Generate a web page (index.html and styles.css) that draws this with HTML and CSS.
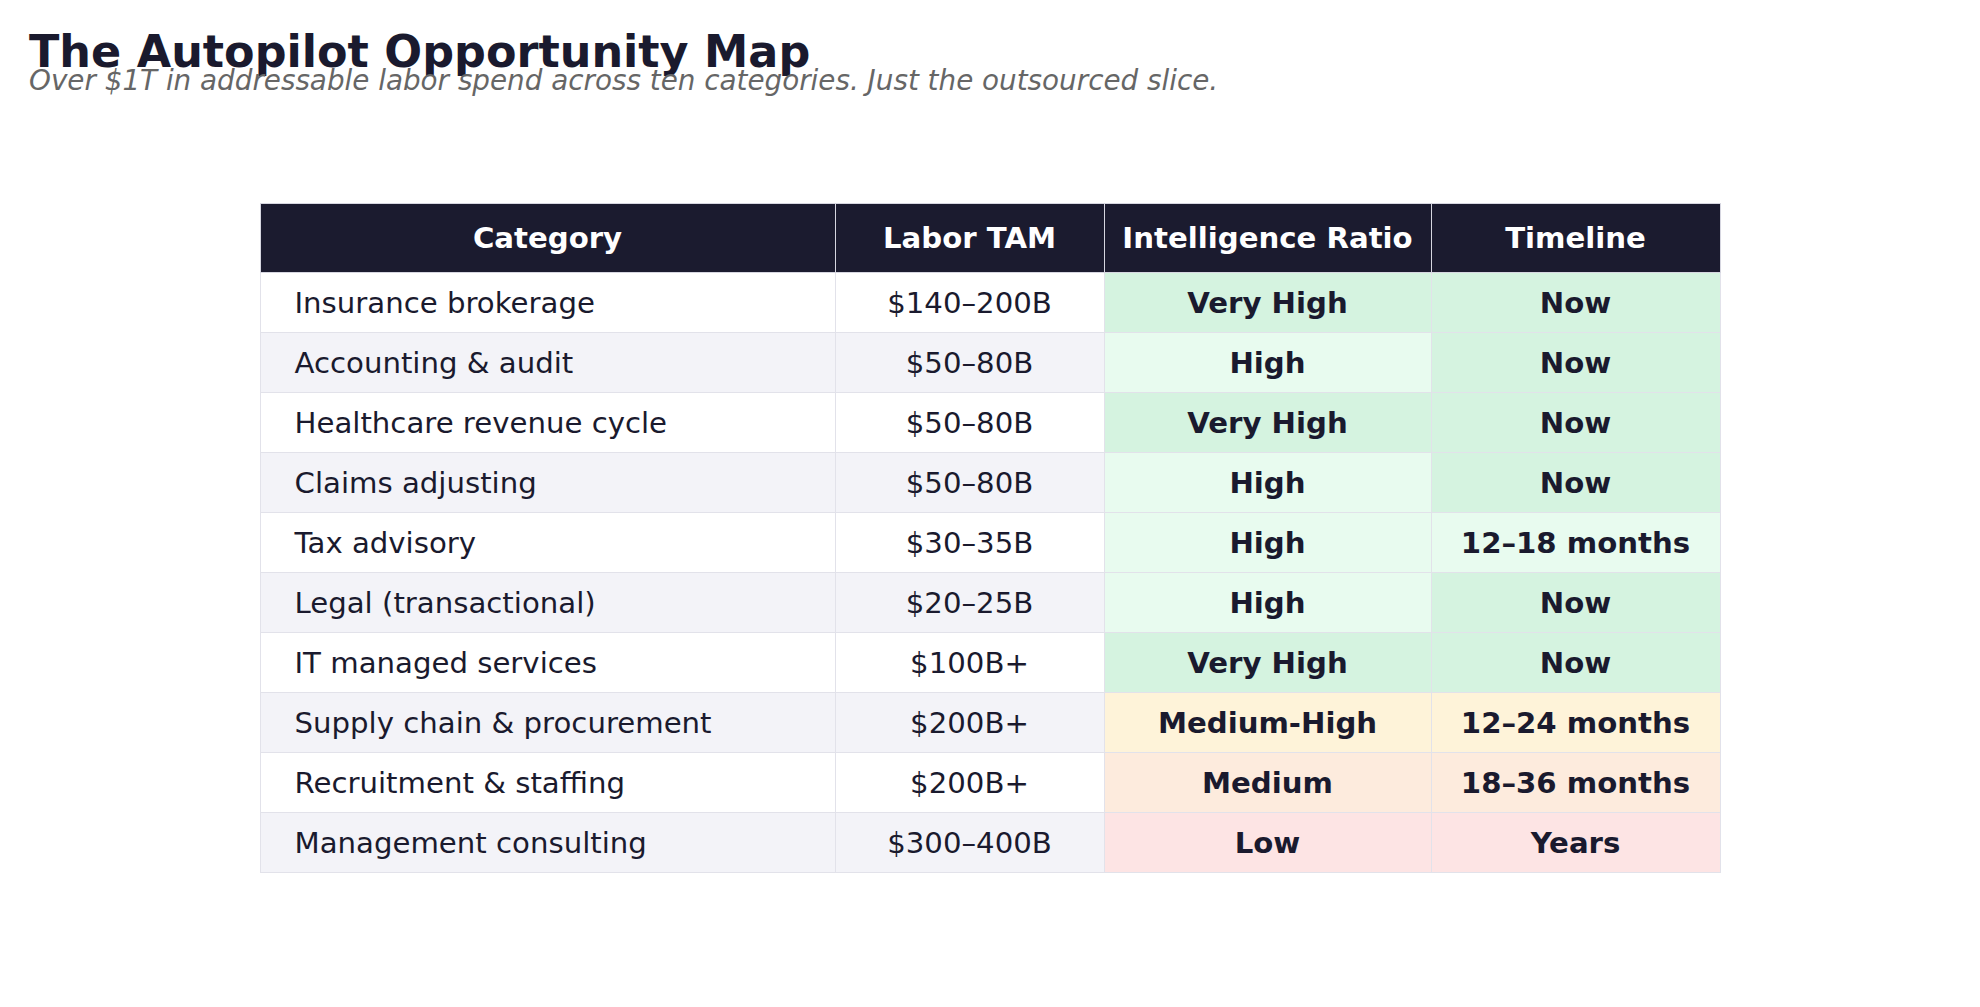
FILE: index.html
```html
<!DOCTYPE html>
<html lang="en">
<head>
<meta charset="utf-8">
<title>The Autopilot Opportunity Map</title>
<link rel="stylesheet" href="styles.css">
</head>
<body>
<header class="page-head">
  <h1 class="title">The Autopilot Opportunity Map</h1>
  <p class="subtitle">Over $1T in addressable labor spend across ten categories. Just the outsourced slice.</p>
</header>
<main class="content">
  <table class="map">
    <colgroup>
      <col class="c-cat"><col class="c-tam"><col class="c-ratio"><col class="c-time">
    </colgroup>
    <thead>
      <tr><th>Category</th><th>Labor TAM</th><th>Intelligence Ratio</th><th>Timeline</th></tr>
    </thead>
    <tbody>
      <tr><td class="cat">Insurance brokerage</td><td class="tam">$140–200B</td><td class="tag vhigh">Very High</td><td class="tag vhigh">Now</td></tr>
      <tr><td class="cat">Accounting &amp; audit</td><td class="tam">$50–80B</td><td class="tag high">High</td><td class="tag vhigh">Now</td></tr>
      <tr><td class="cat">Healthcare revenue cycle</td><td class="tam">$50–80B</td><td class="tag vhigh">Very High</td><td class="tag vhigh">Now</td></tr>
      <tr><td class="cat">Claims adjusting</td><td class="tam">$50–80B</td><td class="tag high">High</td><td class="tag vhigh">Now</td></tr>
      <tr><td class="cat">Tax advisory</td><td class="tam">$30–35B</td><td class="tag high">High</td><td class="tag high">12–18 months</td></tr>
      <tr><td class="cat">Legal (transactional)</td><td class="tam">$20–25B</td><td class="tag high">High</td><td class="tag vhigh">Now</td></tr>
      <tr><td class="cat">IT managed services</td><td class="tam">$100B+</td><td class="tag vhigh">Very High</td><td class="tag vhigh">Now</td></tr>
      <tr><td class="cat">Supply chain &amp; procurement</td><td class="tam">$200B+</td><td class="tag mhigh">Medium-High</td><td class="tag mhigh">12–24 months</td></tr>
      <tr><td class="cat">Recruitment &amp; staffing</td><td class="tam">$200B+</td><td class="tag medium">Medium</td><td class="tag medium">18–36 months</td></tr>
      <tr><td class="cat">Management consulting</td><td class="tam">$300–400B</td><td class="tag low">Low</td><td class="tag low">Years</td></tr>
    </tbody>
  </table>
</main>
</body>
</html>
```
FILE: styles.css
```css
html, body {
  margin: 0;
  padding: 0;
  background: #ffffff;
}

body {
  font-family: "DejaVu Sans", "Liberation Sans", sans-serif;
  color: #1a1a2e;
  padding: 26px 29px 0 29px;
}

.page-head {
  display: flex;
  flex-direction: column;
}

.title {
  margin: 0 0 -13px 0;
  font-size: 44.5px;
  font-weight: 700;
  line-height: normal;
  color: #1a1a2e;
}

.subtitle {
  margin: 0;
  font-size: 27.8px;
  font-style: italic;
  line-height: normal;
  color: #666666;
}

.content {
  display: flex;
  justify-content: center;
  margin-top: 106px;
  margin-left: -29px;
  margin-right: -29px;
}

.map {
  border-collapse: collapse;
  width: 1460px;
  table-layout: fixed;
  font-size: 29.2px;
}

.c-cat { width: 575px; }
.c-tam { width: 269px; }
.c-ratio { width: 327px; }
.c-time { width: 289px; }

.map th {
  background: #1b1b2f;
  color: #ffffff;
  font-weight: 700;
  text-align: center;
  height: 68px;
  padding: 0 8px;
  border: 1px solid #d6d6e0;
}

.map td {
  height: 59px;
  padding: 0 8px;
  border: 1px solid #e2e2ea;
  text-align: center;
  background: #ffffff;
}

.map tbody tr:nth-child(even) td {
  background: #f3f3f8;
}

.map td.cat {
  text-align: left;
  padding-left: 34px;
}

.map td.tag {
  font-weight: 700;
}

.map tbody tr td.vhigh { background: #d5f3e0; }
.map tbody tr td.high { background: #e8fbef; }
.map tbody tr td.mhigh { background: #fef3d9; }
.map tbody tr td.medium { background: #fdebdd; }
.map tbody tr td.low { background: #fde4e4; }
```
